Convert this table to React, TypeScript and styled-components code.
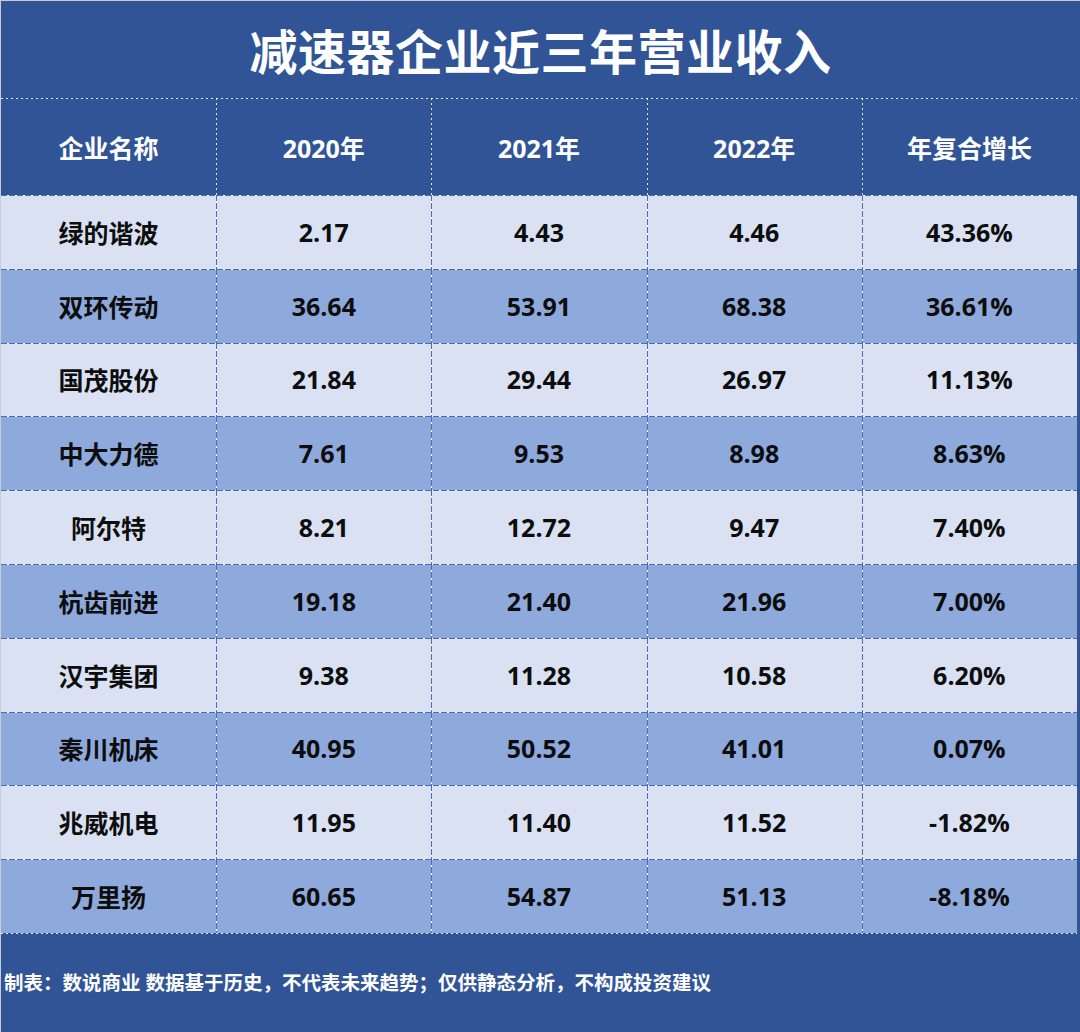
import React from "react";
import styled, { createGlobalStyle } from "styled-components";

/* ---------------- colours ---------------- */

const COLOR_BG = "#305496";
const COLOR_ROW_LIGHT = "#D9E1F2";
const COLOR_ROW_DARK = "#8EA9DB";
const COLOR_RULE = "#4a6db3";

const FONT = `"Open Sans", "Noto Sans CJK SC", "Noto Sans", sans-serif`;

const dashH = `repeating-linear-gradient(90deg, ${COLOR_RULE} 0 6px, #ffffff 6px 8px)`;
const dashV = `repeating-linear-gradient(180deg, ${COLOR_RULE} 0 6px, #ffffff 6px 8px)`;
const dotH = `repeating-linear-gradient(90deg, rgba(255,255,255,0.85) 0 2px, transparent 2px 5px)`;
const dotV = `repeating-linear-gradient(180deg, rgba(255,255,255,0.85) 0 2px, transparent 2px 5px)`;

/* ---------------- layout ---------------- */

const GlobalStyle = createGlobalStyle`
  html, body {
    margin: 0;
    padding: 0;
    background: ${COLOR_BG};
  }
  * {
    box-sizing: border-box;
  }
`;

const Sheet = styled.div`
  width: 1080px;
  height: 1032px;
  background: ${COLOR_BG};
  border-top: 1px solid #c9ccd4;
  border-left: 1px solid #c9ccd4;
  display: flex;
  flex-direction: column;
  font-family: ${FONT};
  overflow: hidden;
`;

const Title = styled.h1`
  margin: 0;
  height: 97px;
  display: flex;
  align-items: center;
  justify-content: center;
  color: #ffffff;
  font-size: 48px;
  font-weight: 700;
  letter-spacing: 0.5px;
  padding-bottom: 2px;
`;

const Table = styled.div`
  display: flex;
  flex-direction: column;
  margin-right: 3px;
`;

const Row = styled.div<{ $tone: "head" | "light" | "dark" }>`
  display: grid;
  grid-template-columns: repeat(5, 1fr);
  height: ${(p) => (p.$tone === "head" ? "97px" : "73.8px")};
  background-color: ${(p) =>
    p.$tone === "head"
      ? "transparent"
      : p.$tone === "light"
      ? COLOR_ROW_LIGHT
      : COLOR_ROW_DARK};
  background-image: ${(p) => (p.$tone === "head" ? dotH : dashH)};
  background-size: 100% 1px;
  background-repeat: no-repeat;
  background-position: top left;
`;

const Cell = styled.div<{ $head?: boolean; $first?: boolean }>`
  display: flex;
  align-items: center;
  justify-content: center;
  color: ${(p) => (p.$head ? "#ffffff" : "#0d0d0d")};
  font-size: 25px;
  font-weight: 700;
  background-image: ${(p) => (p.$first ? "none" : p.$head ? dotV : dashV)};
  background-size: 1px 100%;
  background-repeat: no-repeat;
  background-position: top left;
`;

const Footer = styled.div`
  flex: 1;
  display: flex;
  align-items: center;
  padding: 0 0 0 3px;
  color: #ffffff;
  font-size: 19.5px;
  font-weight: 700;
  background-image: ${dotH};
  background-size: calc(100% - 3px) 1px;
  background-repeat: no-repeat;
  background-position: top left;
  padding-bottom: 2px;
`;

/* ---------------- data ---------------- */

const headers = ["企业名称", "2020年", "2021年", "2022年", "年复合增长"];

const rows: string[][] = [
  ["绿的谐波", "2.17", "4.43", "4.46", "43.36%"],
  ["双环传动", "36.64", "53.91", "68.38", "36.61%"],
  ["国茂股份", "21.84", "29.44", "26.97", "11.13%"],
  ["中大力德", "7.61", "9.53", "8.98", "8.63%"],
  ["阿尔特", "8.21", "12.72", "9.47", "7.40%"],
  ["杭齿前进", "19.18", "21.40", "21.96", "7.00%"],
  ["汉宇集团", "9.38", "11.28", "10.58", "6.20%"],
  ["秦川机床", "40.95", "50.52", "41.01", "0.07%"],
  ["兆威机电", "11.95", "11.40", "11.52", "-1.82%"],
  ["万里扬", "60.65", "54.87", "51.13", "-8.18%"],
];

/* ---------------- page ---------------- */

export default function App() {
  return (
    <>
      <GlobalStyle />
      <Sheet>
        <Title>减速器企业近三年营业收入</Title>

        <Table>
          <Row $tone="head">
            {headers.map((h, i) => (
              <Cell key={h} $head $first={i === 0}>
                {h}
              </Cell>
            ))}
          </Row>

          {rows.map((r, ri) => (
            <Row key={r[0]} $tone={ri % 2 === 0 ? "light" : "dark"}>
              {r.map((v, ci) => (
                <Cell key={ci} $first={ci === 0}>
                  {v}
                </Cell>
              ))}
            </Row>
          ))}
        </Table>

        <Footer>
          制表：数说商业 数据基于历史，不代表未来趋势；仅供静态分析，不构成投资建议
        </Footer>
      </Sheet>
    </>
  );
}
